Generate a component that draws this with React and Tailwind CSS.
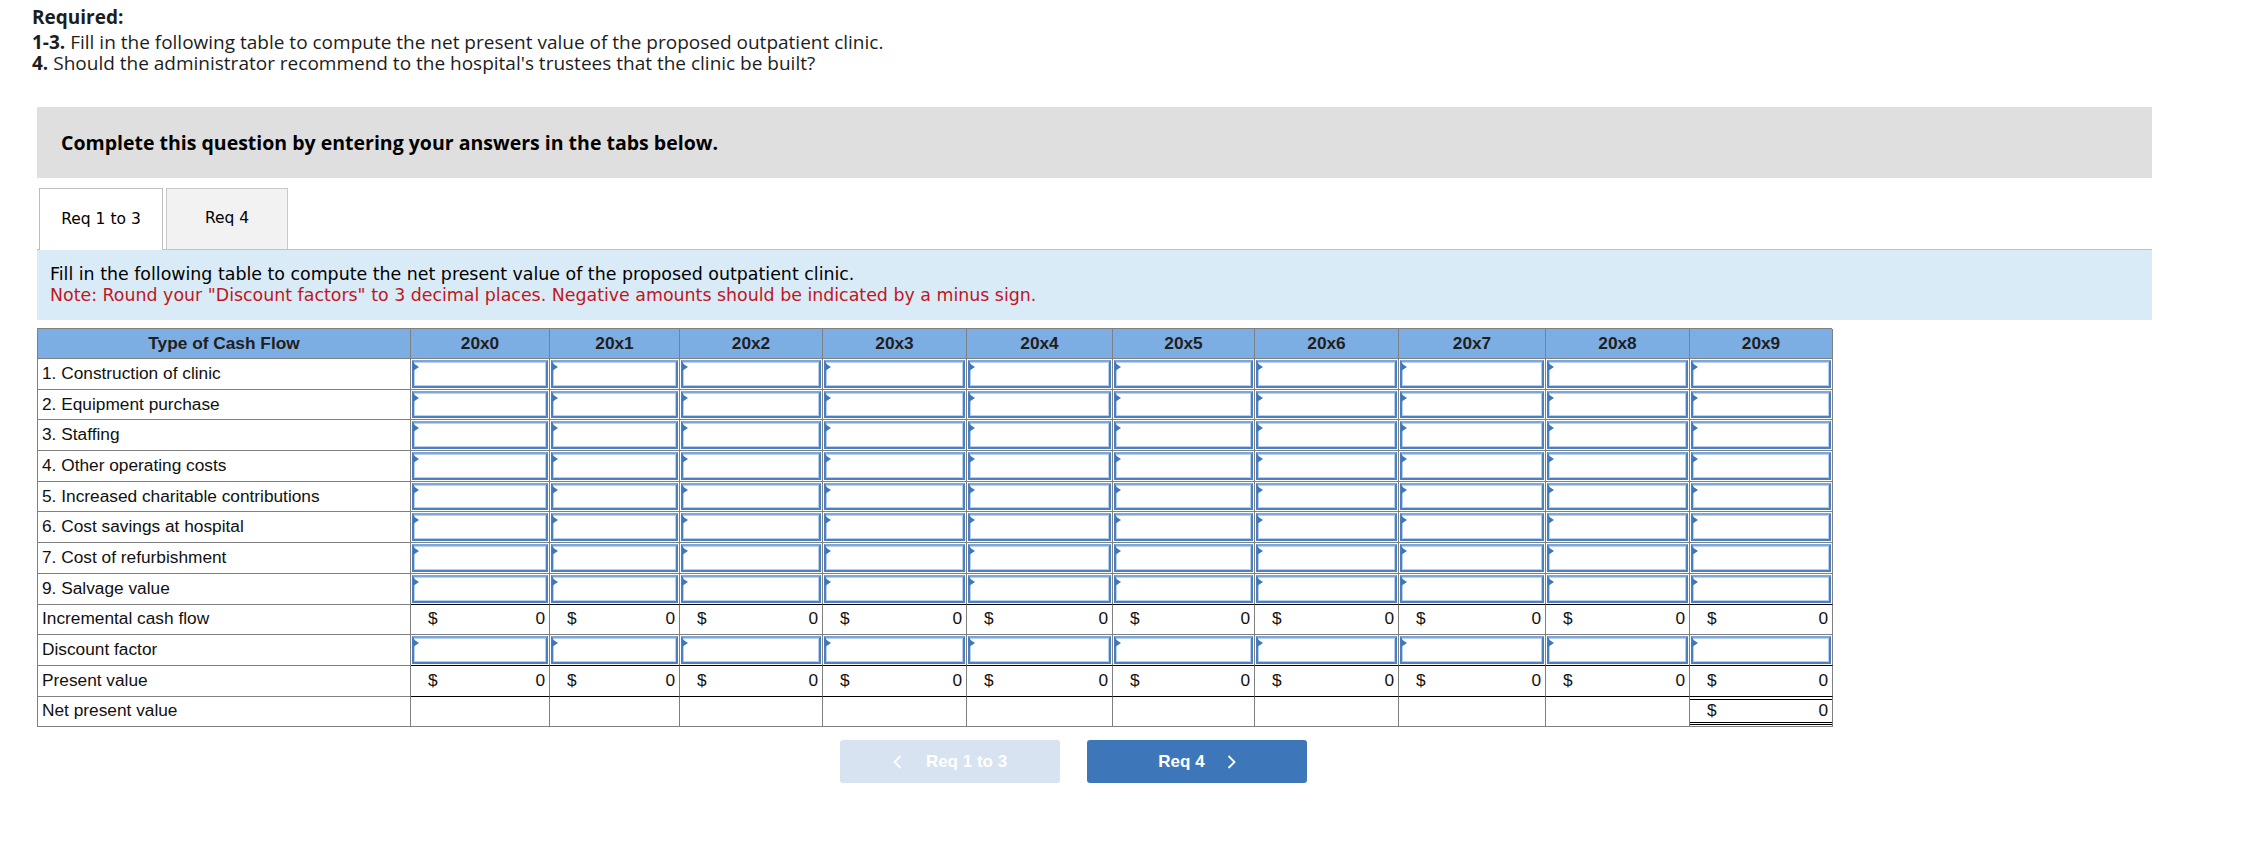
import React from 'react';

const years = ['20x0', '20x1', '20x2', '20x3', '20x4', '20x5', '20x6', '20x7', '20x8', '20x9'];

const rows = [
  { label: '1. Construction of clinic', kind: 'input' },
  { label: '2. Equipment purchase', kind: 'input' },
  { label: '3. Staffing', kind: 'input' },
  { label: '4. Other operating costs', kind: 'input' },
  { label: '5. Increased charitable contributions', kind: 'input' },
  { label: '6. Cost savings at hospital', kind: 'input' },
  { label: '7. Cost of refurbishment', kind: 'input' },
  { label: '9. Salvage value', kind: 'input', blackBottom: true },
  { label: 'Incremental cash flow', kind: 'money' },
  { label: 'Discount factor', kind: 'input', blackBottom: true },
  { label: 'Present value', kind: 'money', blackBottom: true },
  { label: 'Net present value', kind: 'npv' },
];

function InputBox() {
  return (
    <div className="relative h-full w-full border-2 border-[#4a80c2] border-t-[#7ea7d9] bg-white shadow-[inset_0_0_0_1px_#b9d0ec]">
      <span className="absolute left-[-1px] top-[1px] h-0 w-0 border-y-[4.5px] border-l-[6px] border-y-transparent border-l-[#3d78bd]" />
    </div>
  );
}

function Money() {
  return (
    <div className="flex h-full items-center justify-between pl-[17px] pr-[4px]">
      <span>$</span>
      <span>0</span>
    </div>
  );
}

function Chevron({ dir }) {
  return (
    <svg width="9" height="14" viewBox="0 0 9 14" fill="none" stroke="white" strokeWidth="1.8">
      {dir === 'left' ? <path d="M7.5 1 L1.5 7 L7.5 13" /> : <path d="M1.5 1 L7.5 7 L1.5 13" />}
    </svg>
  );
}

export default function App() {
  return (
    <div className="relative h-[848px] w-[2254px] bg-white font-['Liberation_Sans',Arial,sans-serif] text-[#1d1d1d]">
      {/* question text */}
      <div className="h-[107px] pl-[32px] pt-[7px] font-['Open_Sans',sans-serif] text-[19px] leading-[21.5px]">
        <p className="mb-[3px] font-bold">Required:</p>
        <p><span className="font-bold">1-3.</span> Fill in the following table to compute the net present value of the proposed outpatient clinic.</p>
        <p><span className="font-bold">4.</span> Should the administrator recommend to the hospital's trustees that the clinic be built?</p>
      </div>

      <div className="ml-[37px] flex h-[71px] w-[2115px] items-center bg-[#dfdfdf] pl-[24px] font-['Open_Sans',sans-serif] text-[19.5px] font-bold text-black">
        Complete this question by entering your answers in the tabs below.
      </div>

      {/* tabs */}
      <div className="ml-[37px] mt-[10px] flex h-[62px] w-[2115px] items-end border-b border-[#c2c2c2] pl-[2px] font-['DejaVu_Sans',Verdana,sans-serif] text-[15.5px] text-black">
        <div className="relative -mb-px flex h-[62px] w-[124px] items-center justify-center border border-b-0 border-[#bdbdbd] bg-white">
          Req 1 to 3
        </div>
        <div className="ml-[3px] flex h-[61px] w-[122px] items-center justify-center border border-b-0 border-[#c8c8c8] bg-[#f2f2f2]">
          Req 4
        </div>
      </div>

      <div className="ml-[37px] h-[70px] w-[2115px] bg-[#daebf8] px-[13px] pt-[14px] font-['DejaVu_Sans',Verdana,sans-serif] text-[17.4px] leading-[21px] text-black">
        <p>Fill in the following table to compute the net present value of the proposed outpatient clinic.</p>
        <p className="text-[#bf1722]">Note: Round your "Discount factors" to 3 decimal places. Negative amounts should be indicated by a minus sign.</p>
      </div>

      {/* table */}
      <div className="ml-[37px] mt-[8px] grid w-[1795px] grid-cols-[373px_139px_130px_143px_144px_146px_142px_144px_147px_144px_143px] border-l border-t border-[#808080] text-[17.3px] text-[#111]">
        <div className="flex h-[30px] items-center justify-center border-b border-r border-[#808080] bg-[#7cade3] font-bold text-[#1f1f1f]">
          Type of Cash Flow
        </div>
        {years.map((y) => (
          <div key={y} className="flex h-[30px] items-center justify-center border-b border-r border-[#808080] bg-[#7cade3] font-bold text-[#1f1f1f]">
            {y}
          </div>
        ))}

        {rows.map((r) => (
          <React.Fragment key={r.label}>
            <div className="flex h-[30.7px] items-center border-b border-r border-[#808080] pl-[4px]">{r.label}</div>
            {years.map((y, i) => {
              const last = i === years.length - 1;
              const bottom = r.blackBottom ? 'border-b-black' : 'border-b-[#808080]';
              return (
                <div key={y} className={`h-[30.7px] border-b border-r border-r-[#808080] ${bottom} ${r.kind === 'input' ? 'p-px' : ''}`}>
                  {r.kind === 'input' && <InputBox />}
                  {r.kind === 'money' && <Money />}
                  {r.kind === 'npv' && last && (
                    <div className="mt-[2px] flex h-[26px] items-center justify-between border-b-[3px] border-t border-double border-black pl-[17px] pr-[4px]">
                      <span>$</span>
                      <span>0</span>
                    </div>
                  )}
                </div>
              );
            })}
          </React.Fragment>
        ))}
      </div>

      {/* navigation buttons */}
      <div className="ml-[840px] mt-[13px] flex gap-[27px] text-[17px] font-bold text-white">
        <button className="flex h-[43px] w-[220px] items-center justify-center gap-[24px] rounded-[3px] bg-[#d7e3f1]">
          <Chevron dir="left" />
          <span>Req 1 to 3</span>
        </button>
        <button className="flex h-[43px] w-[220px] items-center justify-center gap-[22px] rounded-[3px] bg-[#3d77b9]">
          <span>Req 4</span>
          <Chevron dir="right" />
        </button>
      </div>
    </div>
  );
}
